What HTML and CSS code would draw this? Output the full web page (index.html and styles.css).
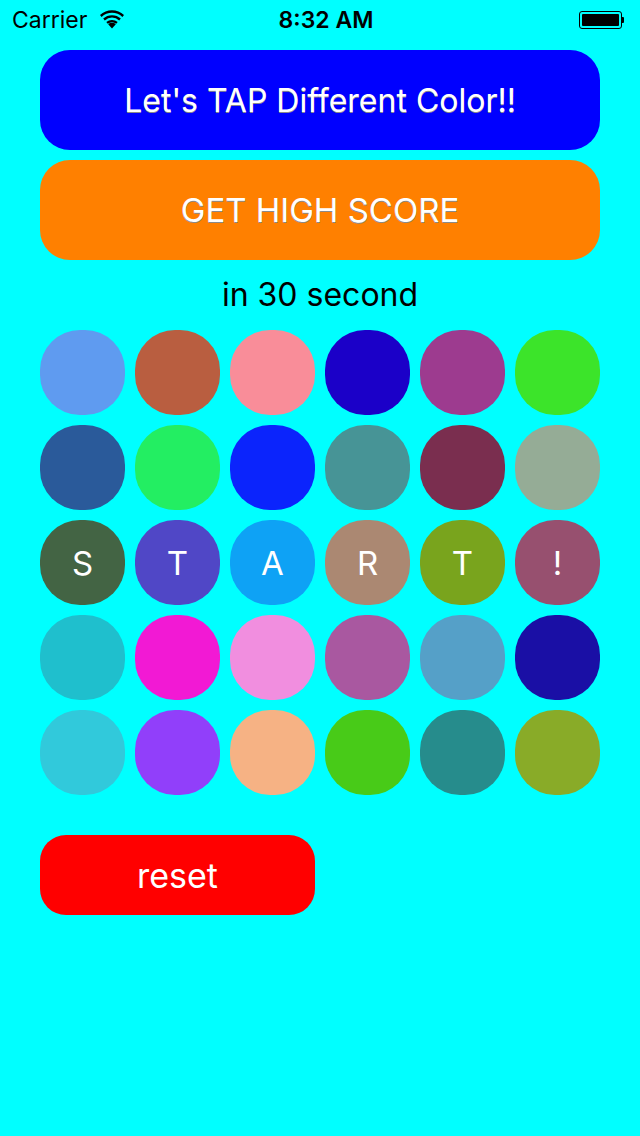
FILE: index.html
```html
<!DOCTYPE html>
<html>
<head>
<meta charset="utf-8">
<link rel="stylesheet" href="styles.css">
</head>
<body>
<div class="status">
  <div class="status-left">
    <span class="carrier">Carrier</span>
    <svg class="wifi" width="26" height="19" viewBox="0 0 26 19">
      <path d="M13 18.5 L9.2 14.2 A5.6 5.6 0 0 1 16.8 14.2 Z" fill="#000"/>
      <path d="M7.3 12.1 A8.6 8.6 0 0 1 18.7 12.1 L17.2 13.8 A6.4 6.4 0 0 0 8.8 13.8 Z" fill="#000"/>
      <path d="M4.2 8.6 A13 13 0 0 1 21.8 8.6 L20.2 10.4 A10.6 10.6 0 0 0 5.8 10.4 Z" fill="#000"/>
      <path d="M1 5.1 A17.6 17.6 0 0 1 25 5.1 L23.4 6.9 A15.2 15.2 0 0 0 2.6 6.9 Z" fill="#000"/>
    </svg>
  </div>
  <div class="time">8:32 AM</div>
  <div class="status-right">
    <div class="battery"><div class="battery-fill"></div></div>
    <div class="battery-tip"></div>
  </div>
</div>
<main class="content">
  <div class="btn btn-blue"><span class="shadow-text">Let's TAP Different Color!!</span></div>
  <div class="btn btn-orange"><span class="shadow-text">GET HIGH SCORE</span></div>
  <div class="subtitle">in 30 second</div>
  <div class="grid">
    <div class="dot c1"></div><div class="dot c2"></div><div class="dot c3"></div><div class="dot c4"></div><div class="dot c5"></div><div class="dot c6"></div>
    <div class="dot c7"></div><div class="dot c8"></div><div class="dot c9"></div><div class="dot c10"></div><div class="dot c11"></div><div class="dot c12"></div>
    <div class="dot c13">S</div><div class="dot c14">T</div><div class="dot c15">A</div><div class="dot c16">R</div><div class="dot c17">T</div><div class="dot c18">!</div>
    <div class="dot c19"></div><div class="dot c20"></div><div class="dot c21"></div><div class="dot c22"></div><div class="dot c23"></div><div class="dot c24"></div>
    <div class="dot c25"></div><div class="dot c26"></div><div class="dot c27"></div><div class="dot c28"></div><div class="dot c29"></div><div class="dot c30"></div>
  </div>
  <div class="btn btn-reset">reset</div>
</main>
</body>
</html>
```
FILE: styles.css
```css
html, body {
  margin: 0;
  padding: 0;
}
body {
  width: 640px;
  height: 1136px;
  background: #00ffff;
  font-family: Inter, Roboto, "Liberation Sans", sans-serif;
  color: #000;
  overflow: hidden;
}
.status {
  height: 40px;
  display: flex;
  align-items: center;
  justify-content: space-between;
  padding: 0 16px 0 12px;
}
.status-left {
  display: flex;
  align-items: center;
  gap: 12px;
  width: 170px;
}
.carrier {
  font-size: 23px;
}
.wifi {
  margin-top: -2px;
}
.time {
  font-size: 23px;
  font-weight: 600;
  margin-left: 16px;
}
.status-right {
  width: 170px;
  display: flex;
  justify-content: flex-end;
  align-items: center;
}
.battery {
  width: 43px;
  height: 18px;
  border: 1px solid #000;
  border-radius: 3px;
  padding: 2px;
  box-sizing: border-box;
  display: flex;
}
.battery-fill {
  flex: 1;
  background: #000;
  border-radius: 1px;
}
.battery-tip {
  width: 2px;
  height: 6px;
  background: #000;
  border-radius: 0 1px 1px 0;
}
.content {
  padding: 10px 40px 0;
  display: flex;
  flex-direction: column;
}
.btn {
  height: 100px;
  border-radius: 30px;
  display: flex;
  align-items: center;
  justify-content: center;
  color: #fff;
  font-size: 33px;
}
.shadow-text {
  text-shadow: 0 1px 0 #8a8a8a;
}
.btn-blue {
  background: #0000ff;
  font-size: 32px;
}
.btn-orange {
  background: #ff8000;
  margin-top: 10px;
}
.subtitle {
  text-align: center;
  font-size: 32px;
  height: 70px;
  line-height: 70px;
}
.grid {
  display: grid;
  grid-template-columns: repeat(6, 85px);
  grid-auto-rows: 85px;
  gap: 10px;
}
.dot {
  border-radius: 40px;
  color: #fff;
  font-size: 33px;
  display: flex;
  align-items: center;
  justify-content: center;
}
.c1 { background: #5f9bf0; }
.c2 { background: #b95e40; }
.c3 { background: #f98d99; }
.c4 { background: #1b00c8; }
.c5 { background: #9d3b8f; }
.c6 { background: #3ce42a; }
.c7 { background: #2a5a9a; }
.c8 { background: #23ee62; }
.c9 { background: #0b24fc; }
.c10 { background: #479496; }
.c11 { background: #7a2e4f; }
.c12 { background: #95ac96; }
.c13 { background: #436444; }
.c14 { background: #5047c6; }
.c15 { background: #0ea2f5; }
.c16 { background: #ab8872; }
.c17 { background: #79a41d; }
.c18 { background: #97506f; }
.c19 { background: #1fbfcd; }
.c20 { background: #f219d4; }
.c21 { background: #f18edf; }
.c22 { background: #a958a0; }
.c23 { background: #55a0c8; }
.c24 { background: #1a0fa5; }
.c25 { background: #31c9db; }
.c26 { background: #913ffa; }
.c27 { background: #f6b284; }
.c28 { background: #48cb18; }
.c29 { background: #268c8c; }
.c30 { background: #89ab28; }
.btn-reset {
  margin-top: 40px;
  width: 275px;
  height: 80px;
  border-radius: 26px;
  background: #ff0000;
  font-size: 34px;
}
```
